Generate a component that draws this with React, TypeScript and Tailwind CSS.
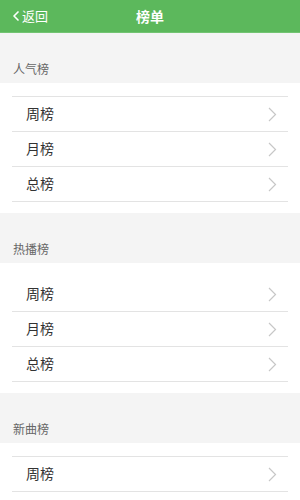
import { ChevronLeft } from 'lucide-react';

const sections = [
  { title: '人气榜', topLine: true, items: ['周榜', '月榜', '总榜'] },
  { title: '热播榜', topLine: false, items: ['周榜', '月榜', '总榜'] },
  { title: '新曲榜', topLine: true, items: ['周榜', '月榜', '总榜'] },
];

function Chevron() {
  return (
    <svg width="9" height="15" viewBox="0 0 9 15" fill="none">
      <path d="M1 1l6.5 6.5L1 14" stroke="#c7c7c7" strokeWidth="1.2" />
    </svg>
  );
}

export default function App() {
  return (
    <div
      className="w-[300px] h-[500px] overflow-hidden bg-[#f4f4f4]"
      style={{ fontFamily: '"Noto Sans CJK SC", "Noto Sans", sans-serif' }}
    >
      <div className="relative h-[33px] bg-[#5cb85c] border-b border-[#72c472] flex items-center justify-center">
        <div className="absolute left-[8px] top-0 h-full flex items-center text-white text-[13px]">
          <ChevronLeft className="w-[16px] h-[16px] -mr-[2px]" strokeWidth={2.5} />
          <span>返回</span>
        </div>
        <span className="text-white text-[14px] font-bold">榜单</span>
      </div>

      {sections.map((s) => (
        <div key={s.title}>
          <div className="h-[50px] flex items-end pl-[13px] pb-[5px] text-[12px] text-[#666]">
            {s.title}
          </div>
          <div className="bg-white pt-[13px] pb-[11px]">
            <div className={`mx-[12px] ${s.topLine ? 'border-t border-[#e3e3e3]' : 'pt-px'}`}>
              {s.items.map((it) => (
                <div
                  key={it}
                  className="h-[35px] border-b border-[#e3e3e3] flex items-center justify-between pl-[14px] pr-[11px]"
                >
                  <span className="text-[14px] text-[#333] leading-[20px] pb-[3px]">{it}</span>
                  <Chevron />
                </div>
              ))}
            </div>
          </div>
        </div>
      ))}
    </div>
  );
}
